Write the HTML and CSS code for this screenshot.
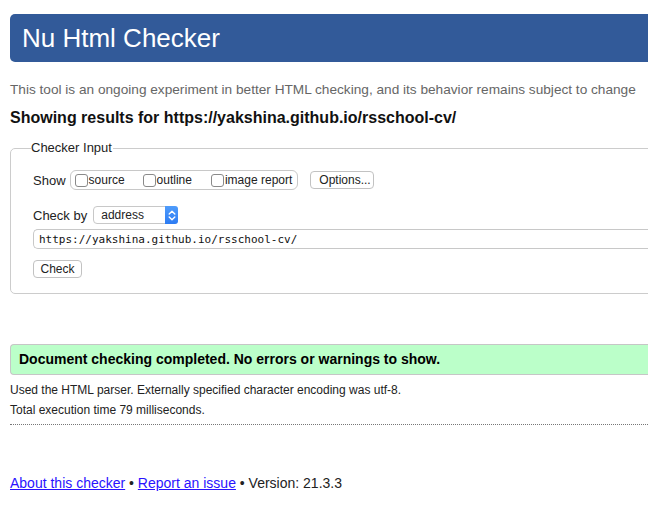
FILE: index.html
```html
<!DOCTYPE html>
<html lang="en">
<head>
<meta charset="utf-8">
<title>Showing results for https://yakshina.github.io/rsschool-cv/ - Nu Html Checker</title>
<link rel="stylesheet" href="styles.css">
</head>
<body>
<div class="page">
  <h1 class="brand">Nu Html Checker</h1>
  <p class="tagline">This tool is an ongoing experiment in better HTML checking, and its behavior remains subject to change</p>
  <h2 class="results-title">Showing results for https://yakshina.github.io/rsschool-cv/</h2>

  <fieldset class="checker">
    <legend class="checker-legend">Checker Input</legend>
    <div class="row row-show">
      <span class="row-label">Show</span>
      <div class="show-group">
        <label class="opt"><span class="box"></span>source</label>
        <label class="opt opt-outline"><span class="box"></span>outline</label>
        <label class="opt opt-image"><span class="box"></span>image report</label>
      </div>
      <button class="btn btn-options" type="button">Options...</button>
    </div>
    <div class="row row-by">
      <span class="row-label row-label-by">Check by</span>
      <div class="select">
        <span class="select-text">address</span>
        <span class="stepper">
          <svg width="8" height="11" viewBox="0 0 8 11"><path d="M1.2 4 L4 1.3 L6.8 4 M1.2 7 L4 9.7 L6.8 7" fill="none" stroke="#fff" stroke-width="1.4" stroke-linecap="round" stroke-linejoin="round"/></svg>
        </span>
      </div>
    </div>
    <div class="url">https://yakshina.github.io/rsschool-cv/</div>
    <button class="btn btn-check" type="button">Check</button>
  </fieldset>

  <p class="success">Document checking completed. No errors or warnings to show.</p>
  <p class="details details-first">Used the HTML parser. Externally specified character encoding was utf-8.</p>
  <p class="details">Total execution time 79 milliseconds.</p>
  <hr class="rule">

  <p class="footer"><a href="#">About this checker</a> • <a href="#">Report an issue</a> • Version: 21.3.3</p>
</div>
</body>
</html>
```
FILE: styles.css
```css
html {
  overflow: hidden;
  background: #fff;
}
body {
  margin: 0;
  font-family: "Liberation Sans", Arial, sans-serif;
  color: #222;
}
.page {
  width: 700px;
  padding: 14px 0 0 10px;
}
.brand {
  margin: 0;
  height: 48px;
  line-height: 48px;
  padding-left: 12px;
  background: #325a99;
  color: #fff;
  font-size: 26px;
  font-weight: normal;
  border-radius: 5px 0 0 5px;
}
.tagline {
  margin: 20px 0 0;
  font-size: 13.65px;
  line-height: 16px;
  color: #666;
  white-space: nowrap;
}
.results-title {
  margin: 10px 0 0;
  font-size: 16px;
  line-height: 20px;
  font-weight: bold;
  color: #111;
}
.checker {
  margin: 13px 0 0;
  padding: 0 0 15px 22px;
  border: 1px solid #ccc;
  border-radius: 5px 0 0 5px;
  min-width: 0;
}
.checker-legend {
  margin-left: -2px;
  padding: 0 1px 0 0;
  font-size: 13px;
  line-height: 14px;
  color: #222;
}
.row {
  display: flex;
  align-items: center;
  font-size: 13px;
}
.row-show {
  margin-top: 15px;
  height: 20px;
}
.row-label {
  margin-right: 4px;
}
.row-label-by {
  margin-right: 6px;
}
.show-group {
  display: flex;
  align-items: center;
  height: 18px;
  padding: 0 5px 0 4px;
  border: 1px solid #c8c8c8;
  border-radius: 6px;
  font-size: 12px;
}
.opt {
  display: flex;
  align-items: center;
}
.opt-outline {
  margin-left: 18px;
}
.opt-image {
  margin-left: 19px;
}
.box {
  width: 11px;
  height: 11px;
  border: 1px solid #8a8a8a;
  border-radius: 3px;
  margin-right: 1px;
  background: #fff;
}
.btn {
  font-family: "Liberation Sans", Arial, sans-serif;
  font-size: 12px;
  color: #222;
  background: #fff;
  border: 1px solid #c2c2c2;
  border-radius: 4px;
  padding: 0 8px;
  height: 18px;
  line-height: 16px;
}
.btn-options {
  margin-left: 12px;
  width: 64px;
}
.row-by {
  margin-top: 16px;
  height: 18px;
}
.select {
  display: flex;
  align-items: stretch;
  width: 85px;
  height: 18px;
  border: 1px solid #c8c8c8;
  border-radius: 4px;
  box-sizing: border-box;
  font-size: 12px;
}
.select-text {
  flex: 1;
  padding-left: 7px;
  line-height: 16px;
}
.stepper {
  width: 13px;
  display: flex;
  align-items: center;
  justify-content: center;
  background: linear-gradient(#4f9cfb, #2d7cf3);
  border-radius: 0 3px 3px 0;
  margin: -1px -1px -1px 0;
}
.url {
  margin-top: 5px;
  height: 20px;
  line-height: 19px;
  box-sizing: border-box;
  border: 1px solid #c8c8c8;
  border-right: 0;
  border-radius: 5px 0 0 5px;
  padding-left: 5px;
  font-family: "DejaVu Sans Mono", "Liberation Mono", monospace;
  font-size: 11px;
  color: #111;
}
.btn-check {
  margin-top: 11px;
  width: 49px;
  padding: 0;
  display: block;
}
.success {
  margin: 50px 0 0;
  height: 31px;
  box-sizing: border-box;
  line-height: 29px;
  padding-left: 8px;
  background: #bbffc9;
  border: 1px solid #c6c6c6;
  border-right: 0;
  border-radius: 4px 0 0 4px;
  font-size: 14px;
  font-weight: bold;
  color: #000;
}
.details {
  margin: 0;
  font-size: 12px;
  line-height: 20px;
}
.details-first {
  margin-top: 5px;
}
.rule {
  margin: 4px 0 0;
  border: 0;
  border-top: 1px dotted #777;
  height: 0;
}
.footer {
  margin: 50px 0 0;
  font-size: 14px;
  line-height: 16px;
  color: #222;
}
.footer a {
  color: #2a12ff;
}
```
